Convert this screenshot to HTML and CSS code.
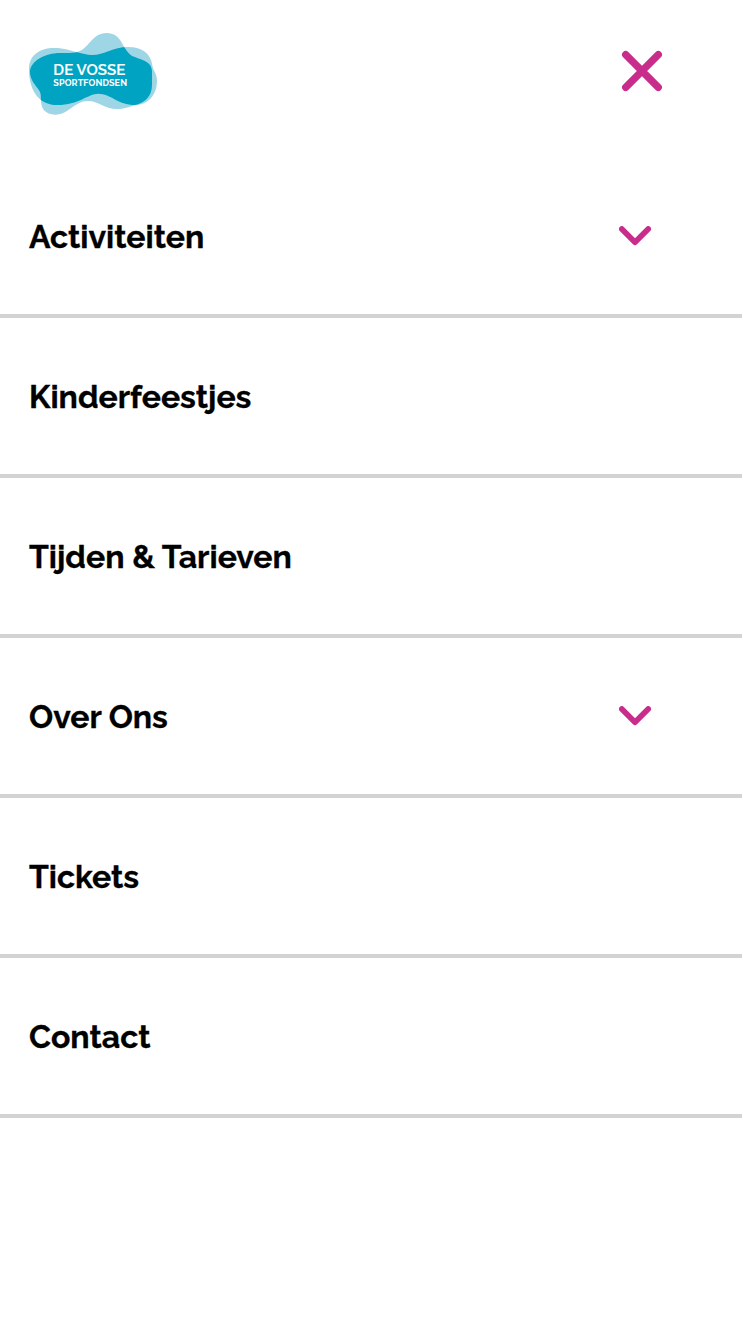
FILE: index.html
```html
<!DOCTYPE html>
<html lang="nl">
<head>
<meta charset="utf-8">
<title>De Vosse Sportfondsen</title>
<link rel="stylesheet" href="styles.css">
</head>
<body>
<header class="header">
  <a class="logo" href="#" aria-label="De Vosse Sportfondsen">
    <svg class="logo-svg" viewBox="24 24 390 249">
      <defs>
        <path id="wide" d="M27 137C26 96 56 72 103 72C134 72 152 80 172 85C188 89 200 93 216 93C254 93 278 69 325 69C367 69 392 88 397 124C399 140 411 149 411 170C411 212 384 243 346 243C291 243 275 209 234 209C205 209 176 243 112 243C50 243 27 190 27 137Z"/>
        <path id="tall" d="M30 144C31 112 74 87 120 87C142 87 157 88 172 84C207 75 215 27 260 27C305 27 307 74 331 92C352 107 396 106 396 142L396 182C396 218 374 236 346 243C327 250 313 255 290 255C254 255 235 231 204 231C163 231 147 272 106 272C74 272 64 252 63 232C62 217 65 208 54 194C43 180 30 165 30 144Z"/>
        <clipPath id="overlap"><use href="#wide"/></clipPath>
      </defs>
      <use class="logo-light" href="#wide"/>
      <use class="logo-light" href="#tall"/>
      <use class="logo-dark" href="#tall" clip-path="url(#overlap)"/>
      <text class="logo-name" x="100" y="154" textLength="216">DE VOSSE</text>
      <text class="logo-sub" x="100" y="186" textLength="221">SPORTFONDSEN</text>
    </svg>
  </a>
  <button class="close" aria-label="Sluiten">
    <svg class="close-svg" viewBox="0 0 42 42"><path d="M4.7 4.7L37.3 37.3M37.3 4.7L4.7 37.3"/></svg>
  </button>
</header>
<nav class="menu">
  <a class="item" href="#"><span class="label">Activiteiten</span><svg class="chevron" viewBox="0 0 32 20"><path d="M2.8 3L16 16.2L29.2 3"/></svg></a>
  <a class="item" href="#"><span class="label">Kinderfeestjes</span></a>
  <a class="item" href="#"><span class="label">Tijden &amp; Tarieven</span></a>
  <a class="item" href="#"><span class="label">Over Ons</span><svg class="chevron" viewBox="0 0 32 20"><path d="M2.8 3L16 16.2L29.2 3"/></svg></a>
  <a class="item" href="#"><span class="label">Tickets</span></a>
  <a class="item" href="#"><span class="label">Contact</span></a>
</nav>
</body>
</html>
```
FILE: styles.css
```css
* { box-sizing: border-box; }
body {
  margin: 0;
  min-height: 1330px;
  background: #fff;
  color: #000;
  font-family: Raleway, Lato, sans-serif;
}
.header {
  height: 158px;
  padding: 32px 79px 0 28px;
  display: flex;
  align-items: flex-start;
  justify-content: space-between;
}
.logo, .logo-svg { display: block; width: 130px; height: 83px; }
.logo-light { fill: #9fd6e6; }
.logo-dark { fill: #00a3c1; }
.logo-name, .logo-sub { fill: #fff; font-weight: 700; }
.logo-name { font-size: 45px; stroke: #fff; stroke-width: 0.6px; font-weight: 600; }
.logo-sub { font-size: 27px; }
.close {
  margin: 18px 0 0;
  padding: 0;
  border: 0;
  background: none;
}
.close-svg { display: block; width: 42px; height: 42px; }
.close path, .chevron path {
  fill: none;
  stroke: #c82d8b;
  stroke-width: 7.3;
  stroke-linecap: round;
}
.chevron { width: 32px; height: 20px; }
.chevron path { stroke-width: 5.7; stroke-linejoin: round; }
.item {
  height: 160px;
  padding: 0 91px 0 29px;
  border-bottom: 4px solid #d3d3d3;
  display: flex;
  align-items: center;
  justify-content: space-between;
  color: inherit;
  text-decoration: none;
}
.label {
  padding-top: 2px;
  font-size: 32px;
  font-weight: 700;
  line-height: 40px;
  white-space: nowrap;
  -webkit-text-stroke: 0.3px #000;
}
```
